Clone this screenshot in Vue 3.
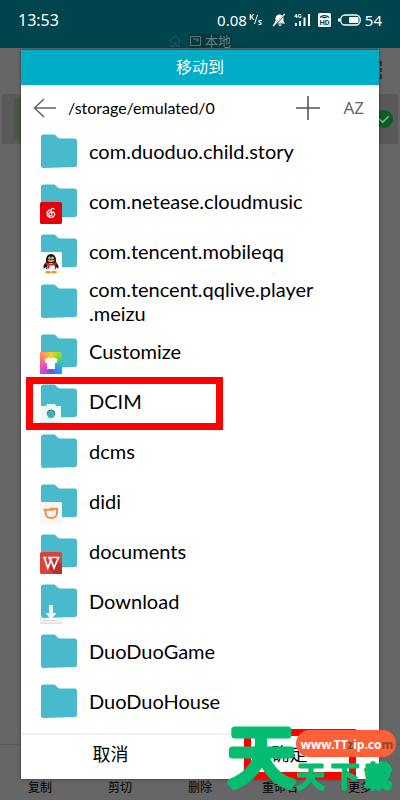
<template>
  <div class="screen">
    <header class="top">
      <div class="status">
        <span class="clock">13:53</span>
        <div class="status-right">
          <span class="speed">0.08</span>
          <svg class="unit" width="14" height="14" viewBox="0 0 14 14" fill="#fff" font-family="Noto Sans, sans-serif" font-weight="600"><text x="0" y="7" font-size="8">K</text><text x="9" y="12" font-size="8">s</text><path d="M8.500 2 5.500 11" stroke="#fff"/></svg>
          <svg class="bell" width="14" height="14" viewBox="0 0 14 14" fill="#fff"><path d="M2 10.500 3.500 8V5.500C3.500 3 5 1.800 7 1.500c1.500 0 2.400.5 3 1.200L2.300 10.700zM11.500 4v4l1.500 2.500H5.500zM6 11.500h4L8 13.300z"/><path d="M1 13 12.800 1" stroke="#fff" stroke-width="1.300"/></svg>
          <svg class="signal" width="17" height="14" viewBox="0 0 17 14" fill="#fff"><text x="0" y="5" font-size="6" font-family="Roboto, sans-serif" font-weight="700">4G</text><path d="M1 10h2v3H1zM5 8h2v5H5zM9.500 4.500h2V13h-2zM14 1h2v12h-2z"/></svg>
          <svg class="hd" width="13" height="14" viewBox="0 0 12 13"><rect width="12" height="13" rx="1.500" fill="#fff"/><path d="M2 4.500C3 1.700 9 1.700 10 4.500M4 4.200h4" fill="none" stroke="#00444d" stroke-width="1.200"/><text x="6" y="11.500" text-anchor="middle" font-size="7" font-family="Roboto, sans-serif" font-weight="700" fill="#00444d">HD</text></svg>
          <svg class="battery" width="23" height="12" viewBox="0 0 23 12"><rect x="2.700" y="1" width="19.500" height="10" rx="4.500" fill="none" stroke="#fff" stroke-width="1.300"/><path d="M0 4.500h2v3H0z" fill="#fff"/><rect x="11" y="3" width="9.500" height="6" rx="1" fill="#fff"/></svg>
          <span class="level">54</span>
        </div>
      </div>
      <div class="tabs">
        <svg width="14" height="12" viewBox="0 0 14 12" fill="none" stroke="#27575d"><path d="M1 6 7 1l6 5M3 5v6.500h3V8h2v3.500h3V5"/></svg>
        <span class="tab">
          <svg width="11" height="10" viewBox="0 0 11 10" fill="none" stroke="#59777a"><path d="M.5.500h10v9H.5zM3 3h5v2H6"/></svg>
          本地
        </span>
      </div>
    </header>

    <main class="behind">
      <div class="tools">
        <svg width="16" height="18" viewBox="0 0 16 18" fill="none" stroke="#222" stroke-width="1.500"><path d="M1 5V1h4M11 1h4v4M15 7v4M15 13v4h-4M5 17H1v-4"/></svg>
      </div>
      <div class="picked">
        <span class="thumb"></span>
        <svg width="18" height="18" viewBox="0 0 18 18"><circle cx="9" cy="9" r="9" fill="#075f22"/><path d="m4.500 9 3.200 3.200 6-6" fill="none" stroke="#aaa" stroke-width="1.400"/></svg>
      </div>
    </main>

    <nav class="actions">
      <button v-for="a in actions" :key="a" type="button">{{ a }}</button>
    </nav>

    <div class="overlay">
      <section class="dialog" role="dialog" aria-labelledby="title">
        <h1 id="title">移动到</h1>
        <div class="path-row">
          <button type="button" class="back" aria-label="返回">
            <svg width="23" height="20" viewBox="0 0 23 20" fill="none" stroke="#666" stroke-width="1.600"><path d="M11 1 1.500 10 11 19M1.500 10H23"/></svg>
          </button>
          <span class="path">/storage/emulated/0</span>
          <button type="button" class="add" aria-label="新建">
            <svg width="24" height="24" viewBox="0 0 24 24" stroke="#555" stroke-width="1.600"><path d="M12 0v24M0 12h24"/></svg>
          </button>
          <button type="button" class="sort">AZ</button>
        </div>

        <ul class="list">
          <li v-for="f in folders" :key="f.name" :class="{ marked: f.name === 'DCIM' }">
            <button type="button" class="row">
              <span class="folder">
                <svg width="36" height="34" viewBox="0 0 36 34"><path d="M2.500.5h10c1.500 0 2 .5 3 1.800 1.200 1.400 2 2.200 3.800 2.200h14.500Q36 4.500 36 7v24q0 2-2.500 2l-31 1Q0 34 0 31.500V3Q0 .5 2.500.5z" fill="#49bacb"/></svg>
                <svg v-if="f.badge" class="badge" width="22" height="22" viewBox="0 0 22 22">
                  <template v-if="f.badge === 'music'">
                    <rect width="22" height="22" rx="1.500" fill="#e60009"/>
                    <path d="M14 7c-2-1.200-3.200-.2-2.900 1.500l.9 3.700c.2 2.200-3.400 2-3.200-.3.200-2.600 5.700-2.900 5.900.4 0 4-7.500 4.300-7.700-.6 0-2.100 1.200-3.300 2.800-4" fill="none" stroke="#fff" stroke-width="1.200" stroke-linecap="round"/>
                  </template>
                  <template v-else-if="f.badge === 'qq'">
                    <rect width="22" height="22" rx="1.500" fill="#fff"/>
                    <path d="M6 10C5.500 5 7.500 2 11 2s5.500 3 5 8c2 2 3.300 5 2.300 6.500-.6.500-1.300-.7-1.800-1.500-1 5-10 5-11 0-.5.800-1.200 2-1.800 1.500C2.700 15 4 12 6 10z" fill="#171717"/>
                    <ellipse cx="11" cy="15.300" rx="4.200" ry="4.300" fill="#fff"/>
                    <ellipse cx="9.500" cy="6" rx="1.200" ry="1.600" fill="#fff"/><ellipse cx="12.500" cy="6" rx="1.200" ry="1.600" fill="#fff"/>
                    <path d="M9.700 5.600v1M12.300 5.600v1" stroke="#111" stroke-width=".8"/>
                    <ellipse cx="11" cy="8.800" rx="3.500" ry="1.100" fill="#f5a300"/>
                    <path d="M5.800 10.300c3 1.800 7.500 1.800 10.500 0l.5 1.900c-2.500 1.200-5 1.500-7.300 1.200v3H7.300v-3.500l-2-.8z" fill="#e81c20"/>
                    <ellipse cx="8" cy="20.200" rx="3" ry="1.200" fill="#e99518"/><ellipse cx="14" cy="20.200" rx="3" ry="1.200" fill="#e99518"/>
                  </template>
                  <foreignObject v-else-if="f.badge === 'shirt'" width="22" height="22">
                    <div class="rainbow">
                      <svg width="22" height="22" viewBox="0 0 22 22"><path d="M8.500 5.500q2.500 1.500 5 0l4 1.500-1 4H15v6H7v-6H5.500l-1-4z" fill="#fff"/></svg>
                    </div>
                  </foreignObject>
                  <template v-else-if="f.badge === 'camera'">
                    <path d="M1 4h5l1-2h8l1 2h5v16H1z" fill="#eef8fa"/>
                    <path d="M0 20.500h22" stroke="#cde3e6"/>
                    <circle cx="11" cy="12" r="4.200" fill="#49aebb"/><path d="M7 12a4 4 0 0 1 8 0" fill="none" stroke="#378c99"/>
                  </template>
                  <template v-else-if="f.badge === 'didi'">
                    <rect width="22" height="22" rx="1.500" fill="#f6f6f6"/>
                    <path d="M3.500 7.800h10M10 6.800h7v3.700c0 3.300-2.300 5.500-5.700 5.500s-5.800-2.200-5.800-5.500V7.800" fill="none" stroke="#f58a42" stroke-width="2"/>
                  </template>
                  <template v-else-if="f.badge === 'wps'">
                    <rect width="22" height="22" rx="1.500" fill="#dc4238"/>
                    <path d="m9 17 5-12 8 8v9h-8z" fill="#bb302b"/>
                    <path d="M3 5.500h3.500M4.200 5.500 7.800 16 11 8l3 8 4.500-10.500H9l1.500 3" fill="none" stroke="#fff" stroke-width="1.700"/>
                  </template>
                  <template v-else>
                    <path d="M1.500 16 0 17.500V21h22v-3.500L20.500 16" fill="#fff" stroke="#c5cdd0"/>
                    <path d="M3 18.500h16" stroke="#d2d8da"/>
                    <path d="M9 3h4v8h3.500L11 17.500 5.500 11H9z" fill="#effbff"/>
                  </template>
                </svg>
              </span>
              <span class="name">{{ f.name }}<template v-if="f.suffix"><wbr>{{ f.suffix }}</template></span>
            </button>
          </li>
        </ul>

        <footer class="buttons">
          <button type="button">取消</button>
          <button type="button" class="ok">确定</button>
        </footer>
      </section>
    </div>

    <svg class="watermark" width="174" height="80" viewBox="0 0 174 80">
      <g fill="#05bd70" stroke="#05bd70" stroke-linejoin="round" font-family="Noto Sans CJK SC, sans-serif">
        <text x="2" y="61" font-size="67" stroke-width="7">天</text>
        <g font-size="28" stroke-width="3">
          <text x="71" y="67">天</text>
          <text x="105" y="67">下</text>
          <text x="138" y="67">載</text>
        </g>
      </g>
      <rect x="70" y="10" width="100" height="27" rx="13.500" fill="#ff6038"/>
      <text x="121" y="29" text-anchor="middle" font-size="12" font-weight="700" font-family="Noto Sans, sans-serif" fill="#fff">www.TT<tspan fill="#7d4a3c">z</tspan>ip.co<tspan fill="#7d4a3c">m</tspan></text>
    </svg>
  </div>
</template>

<script setup>
const actions = ['复制', '剪切', '删除', '重命名', '更多']

const folders = [
  { name: 'com.duoduo.child.story' },
  { name: 'com.netease.cloudmusic', badge: 'music' },
  { name: 'com.tencent.mobileqq', badge: 'qq' },
  { name: 'com.tencent.qqlive.player', suffix: '.meizu' },
  { name: 'Customize', badge: 'shirt' },
  { name: 'DCIM', badge: 'camera' },
  { name: 'dcms' },
  { name: 'didi', badge: 'didi' },
  { name: 'documents', badge: 'wps' },
  { name: 'Download', badge: 'download' },
  { name: 'DuoDuoGame' },
  { name: 'DuoDuoHouse' },
]
</script>

<style>
body { background:#666; }
</style>

<style scoped>
*, *::after { box-sizing:border-box; }
button { border:0; padding:0; background:none; font:inherit; color:inherit; cursor:pointer; }
svg { display:block; flex:none; }

.screen {
  position:relative; min-height:100vh; display:flex; flex-direction:column;
  background:#666; color:#000; font-family:Lato, 'Noto Sans CJK SC', sans-serif;
}

.top { height:48px; background:#00444d; color:#fff; }
.status { display:flex; justify-content:space-between; height:34px; padding:6px 18px 0; font:15px/28px 'Noto Sans', sans-serif; }
.clock { font-size:16px; }
.status-right { display:flex; align-items:center; }
.unit { margin-left:2px; overflow:visible; }
.bell { margin-left:9px; }
.signal { margin-left:8px; }
.hd { margin-left:7px; }
.battery { margin-left:7px; }
.level { margin-left:4px; }
.tabs { display:flex; justify-content:center; align-items:center; gap:7px; height:14px; }
.tab { display:flex; align-items:center; gap:4px; padding:0 1px; background:#07383e; color:#668083; font-size:13px; line-height:14px; }

.behind { flex:1; }
.tools { display:flex; justify-content:flex-end; padding:13px 18px 15px; }
.picked { display:flex; justify-content:space-between; align-items:center; height:50px; margin:0 2px; padding:0 5px 0 12px; background:#595959; }
.thumb { width:36px; height:42px; background:#4b554a; }

.actions { display:grid; grid-template-columns:repeat(5, 1fr); align-items:end; height:56px; padding-bottom:3px; border-top:1px solid #5b5b5b; font-size:12px; line-height:18px; }

.overlay { position:absolute; inset:0; display:flex; padding:50px 21px 21px; }
.dialog { flex:1; min-width:0; display:flex; flex-direction:column; background:#fff; box-shadow:0 0 3px rgba(0,0,0,.5); }
.dialog h1 { height:35px; margin:0; background:#00adc6; color:#fff; text-align:center; font-size:16px; font-weight:400; line-height:33px; }

.path-row { display:flex; align-items:center; height:41px; padding:4px 15px 0 12px; }
.path { flex:1; padding-left:12px; font-size:16px; }
.sort { margin-left:23px; color:#666; font:17px/24px 'Noto Sans', sans-serif; }

.list { flex:1; margin:0; padding:0; list-style:none; }
.list li { position:relative; }
.row { display:flex; align-items:center; gap:12px; width:100%; height:50px; padding:0 48px 0 20px; text-align:left; }
.folder { position:relative; flex:none; }
.badge { position:absolute; left:-1px; bottom:-6px; }
.rainbow { width:22px; height:22px; background:conic-gradient(#ffcf20, #62db45, #20a9ee, #6654ec, #ee45c8, #ff806b, #ffcf20); }
.name { min-width:0; font-size:20px; line-height:24px; overflow-wrap:break-word; }
.marked::after { content:''; position:absolute; left:5px; top:1px; width:197px; height:53px; border:7px solid #fd0000; pointer-events:none; z-index:1; }

.buttons { display:grid; grid-template-columns:1fr 1fr; height:46px; border-top:2px solid #f0f0f0; font-size:18px; }
.buttons button { padding-bottom:8px; }
.ok { position:relative; }
.ok::after { content:''; position:absolute; left:44px; right:23px; top:-6px; bottom:0; border:7px solid #fd0000; }

.watermark { position:absolute; right:0; bottom:0; pointer-events:none; }
</style>
